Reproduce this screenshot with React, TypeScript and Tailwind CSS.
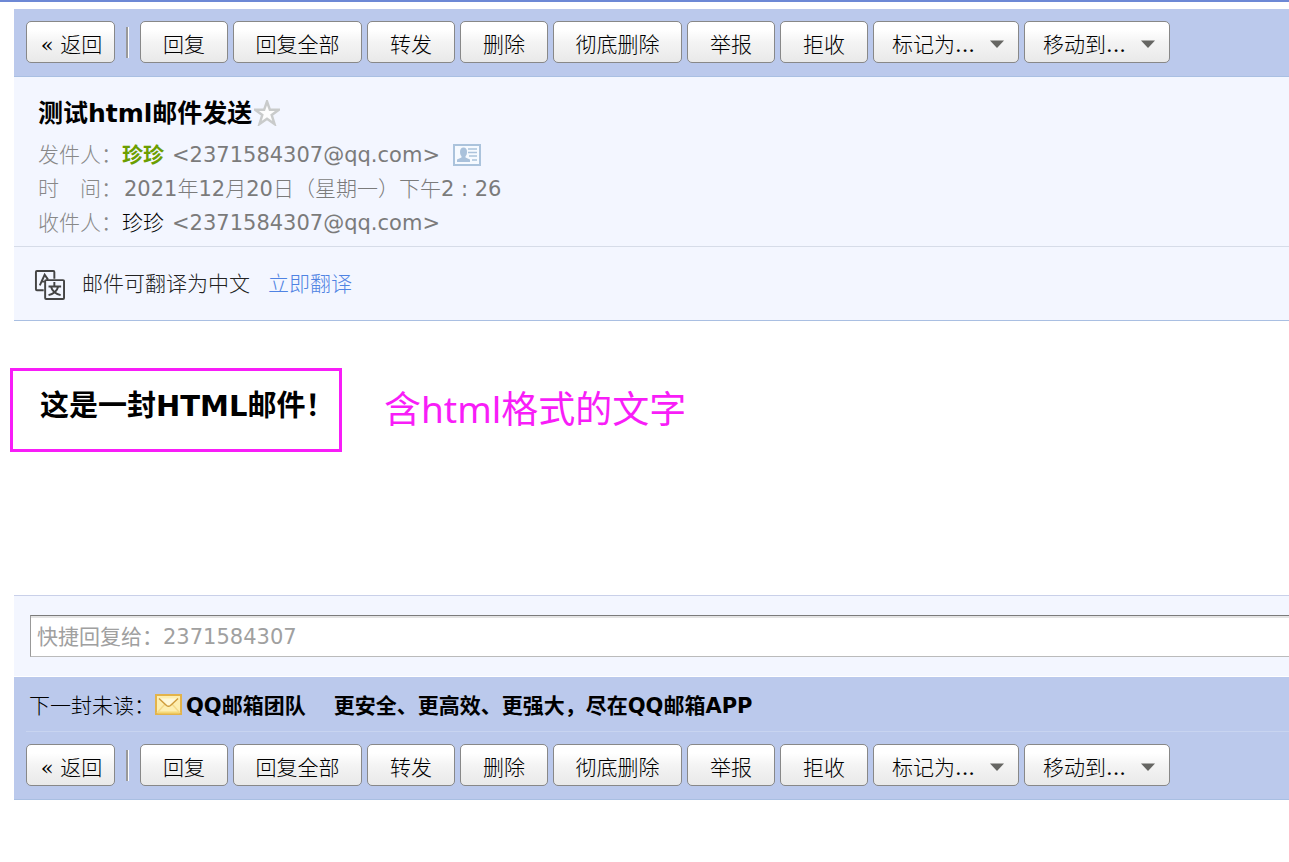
import { clsx } from "clsx";

const buttonStyle =
  "h-[42px] rounded-[5px] border border-[#888888] bg-linear-to-b from-white from-20% via-[#f4f4f4] to-[#e9e9e9] text-black";

const actions = [
  { label: "回复", wide: false },
  { label: "回复全部", wide: true },
  { label: "转发", wide: false },
  { label: "删除", wide: false },
  { label: "彻底删除", wide: true },
  { label: "举报", wide: false },
  { label: "拒收", wide: false },
];

function MenuSelect({ label }: { label: string }) {
  return (
    <div className="relative w-[146px] shrink-0">
      <select aria-label={label} className={clsx(buttonStyle, "w-full appearance-none pt-[6px] pl-[18px]")}>
        <option>{label}</option>
      </select>
      <svg className="pointer-events-none absolute top-[19px] right-[15px]" width="14" height="8" viewBox="0 0 14 8">
        <path d="M0 0.500H14L7 8Z" fill="#666663" />
      </svg>
    </div>
  );
}

function Toolbar() {
  return (
    <div className="flex items-center gap-[5px] font-['DejaVu_Serif','Noto_Sans_CJK_SC',sans-serif] font-light">
      <button type="button" className={clsx(buttonStyle, "w-[89px] shrink-0 pt-[6px] pl-[2px]")}>
        « 返回
      </button>
      <span className="mr-[6px] ml-[6px] h-[31px] w-[3px] shrink-0 border-r border-l-2 border-r-white border-l-[#999999]" />
      {actions.map((a) => (
        <button
          key={a.label}
          type="button"
          className={clsx(buttonStyle, "shrink-0 pt-[6px]", a.wide ? "w-[129px]" : "w-[88px]")}
        >
          {a.label}
        </button>
      ))}
      <MenuSelect label="标记为..." />
      <MenuSelect label="移动到..." />
    </div>
  );
}

function StarIcon() {
  return (
    <svg width="26" height="26" viewBox="0 0 26 26">
      <path
        d="M13 1.500L15.900 9.800H24.800L17.700 15L20.500 24L13 18.700L5.500 24L8.300 15L1.200 9.800H10.100Z"
        fill="#fdfdfd"
        stroke="#c9cbcb"
        strokeWidth="2.500"
      />
    </svg>
  );
}

function CardIcon() {
  return (
    <svg width="28" height="22" viewBox="0 0 28 22">
      <rect x="1" y="1" width="26" height="20" fill="#f6faff" stroke="#abc3dc" strokeWidth="2" />
      <ellipse cx="10.500" cy="8" rx="3.500" ry="4.500" fill="#a9c1db" />
      <path d="M8.500 11H12.500V13.500L17 15.500V18H4V15.500L8.500 13.500Z" fill="#a9c1db" />
      <path d="M15 5H24M15 8.500H24M16 12H24M19 16H24" stroke="#abc3dc" strokeWidth="1.500" />
    </svg>
  );
}

function TranslateIcon() {
  return (
    <svg width="31" height="31" viewBox="0 0 32 32" fill="none" stroke="#444444" strokeWidth="2">
      <path d="M10 22H3Q2 22 2 21V3Q2 2 3 2H20Q21 2 21 3V10" />
      <path d="M6 17L11 6L14.500 11M8.500 13H11" />
      <rect x="11.500" y="11.500" width="19.500" height="19.500" rx="1" />
      <path d="M21 13.500V17M15 18H28M17.500 18C18.500 22 22 25.500 27.500 27M25 18C24 22 20.500 25.500 15 27" />
    </svg>
  );
}

function MailIcon() {
  return (
    <svg width="27" height="21" viewBox="0 0 27 21">
      <rect x="1" y="1" width="25" height="19" fill="#fdeeb0" stroke="#e3b34a" strokeWidth="2" />
      <path d="M2 19L10 10M25 19L17 10" stroke="#f3d98a" strokeWidth="1.500" />
      <path d="M3 18.500H24" stroke="#f5d876" strokeWidth="2" />
      <path d="M4 4.500L11.500 11.500Q13.500 13 15.500 11.500L23 4.500" fill="#fff8d8" stroke="#cf9c3c" strokeWidth="1.500" />
    </svg>
  );
}

export default function App() {
  return (
    <div className="overflow-hidden bg-white font-['DejaVu_Sans','Noto_Sans_CJK_SC',sans-serif] text-[21px] leading-[34px] whitespace-nowrap text-black">
      <div className="h-[2px] bg-[#6d88d5]" />

      <main className="mt-[7px]">
        <div className="ml-[14px] border-b border-[#a9bfe2] bg-[#bbc9ec] px-3 pt-3 pb-[13px]">
          <Toolbar />
        </div>

        <header className="ml-[14px] border-b border-[#d6dce8] bg-[#f3f6ff] px-6 pt-[21px] pb-[6px]">
          <div className="flex h-8 items-center gap-[2px]">
            <h1 className="text-[25px] font-bold">测试html邮件发送</h1>
            <button type="button" aria-label="星标" className="pb-[2px]">
              <StarIcon />
            </button>
          </div>
          <div className="mt-2 text-[#7b7b7b]">
            <p className="flex items-center">
              <span className="font-light text-[#888888]">发件人：</span>
              <b className="text-[#6b9e00]">珍珍</b>
              <span className="ml-2">&lt;2371584307@qq.com&gt;</span>
              <span className="ml-[13px]">
                <CardIcon />
              </span>
            </p>
            <p className="flex items-center">
              <span className="font-light text-[#888888]">时　间：</span>
              <span className="ml-[2px]">
                2021<span className="font-light">年</span>12<span className="font-light">月</span>20
                <span className="font-light">日（星期一）下午</span>2 : 26
              </span>
            </p>
            <p className="flex items-center">
              <span className="font-light text-[#888888]">收件人：</span>
              <span className="font-light text-black">珍珍</span>
              <span className="ml-2">&lt;2371584307@qq.com&gt;</span>
            </p>
          </div>
        </header>

        <div className="ml-[14px] flex items-center border-b border-[#a9bfe2] bg-[#f3f6ff] px-5 pt-5 pb-[19px] font-light text-[#222222]">
          <TranslateIcon />
          <span className="ml-[17px]">邮件可翻译为中文</span>
          <a href="#translate" className="ml-[18px] text-[#4f83e3]">
            立即翻译
          </a>
        </div>

        <article className="flex items-start pt-[47px] pb-[143px] pl-[10px]">
          <div className="h-[84px] w-[332px] shrink-0 border-[3px] border-[#f81df8] pt-[18px] pl-[27px]">
            <h2 className="text-[29px] font-bold">这是一封HTML邮件！</h2>
          </div>
          <p className="mt-6 ml-[42px] font-['Noto_Sans','Noto_Sans_CJK_SC',sans-serif] text-[37px] text-[#f81df8]">
            含html格式的文字
          </p>
        </article>

        <div className="ml-[14px] border-t border-b border-t-[#c9d0e9] border-b-white bg-[#f3f6ff] pt-[19px] pb-[19px] pl-4">
          <input
            type="text"
            aria-label="快捷回复"
            placeholder="快捷回复给：2371584307"
            className="block h-[42px] w-full border border-r-0 border-t-[#7b7b7b] border-b-[#bbbbbb] border-l-[#999999] bg-white pt-[2px] pl-[6px] shadow-[inset_0_2px_0_#e4e4e4] placeholder:text-[#a0a0a0]"
          />
        </div>

        <footer className="ml-[14px] border-b border-[#a9bfe2] bg-[#bbc9ec] pb-[13px] pl-3">
          <div className="flex items-center border-b border-[#c8d4f0] pt-3 pb-2 pl-[3px]">
            <span className="font-light">下一封未读：</span>
            <a href="#next" className="flex items-center font-bold">
              <span className="pb-1">
                <MailIcon />
              </span>
              <span className="ml-1">QQ邮箱团队</span>
              <span className="ml-7">更安全、更高效、更强大，尽在QQ邮箱APP</span>
            </a>
          </div>
          <div className="pt-3">
            <Toolbar />
          </div>
        </footer>
      </main>
    </div>
  );
}
